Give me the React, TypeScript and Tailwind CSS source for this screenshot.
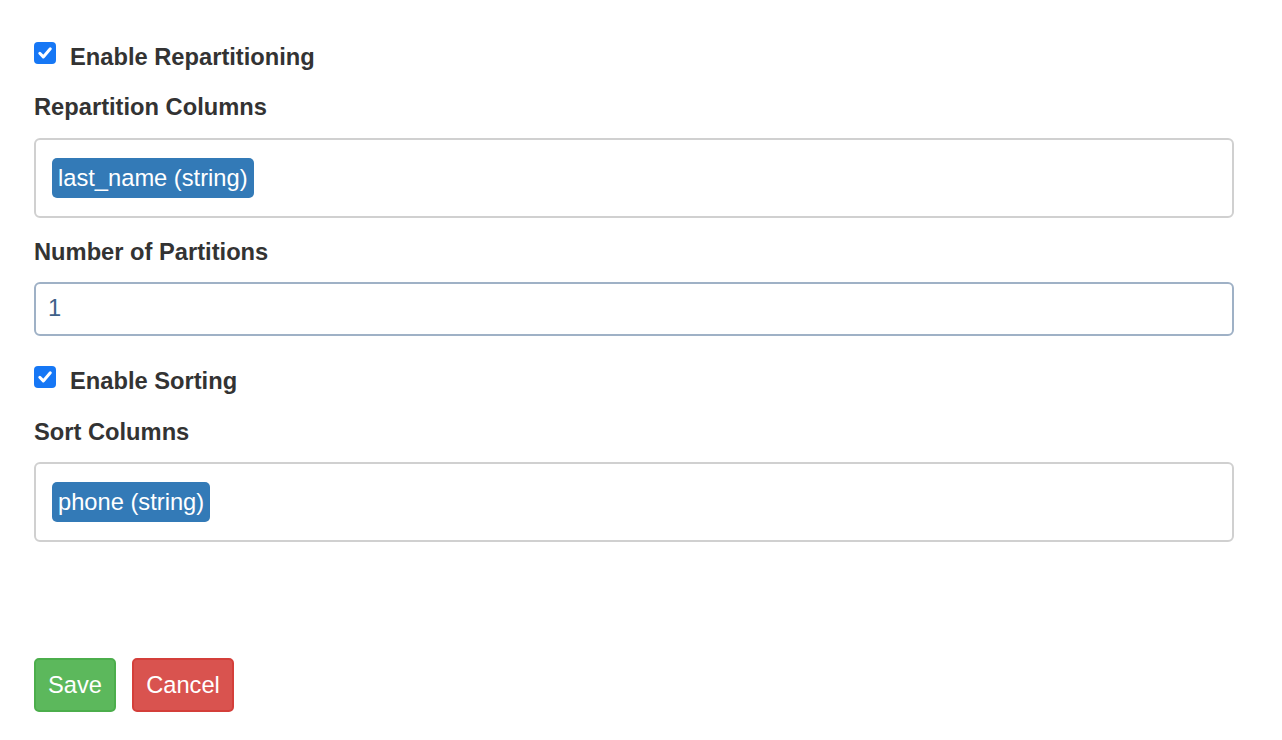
import React from "react";

function Check() {
  return (
    <div className="w-[22px] h-[22px] rounded-[4px] bg-[#1677f5] flex items-center justify-center shrink-0">
      <svg width="22" height="22" viewBox="0 0 22 22">
        <path d="M5.8 11.3 L9.3 14.9 L16.3 6.8" fill="none" stroke="#fff" strokeWidth="3" strokeLinecap="round" strokeLinejoin="round" />
      </svg>
    </div>
  );
}

function Tag({ text }: { text: string }) {
  return (
    <span className="inline-block bg-[#337ab7] text-white rounded-[5px] px-[6px] h-[40px] leading-[40px]">{text}</span>
  );
}

export default function App() {
  return (
    <div className="w-[1282px] h-[740px] bg-white text-[#333] text-[23.7px]" style={{ fontFamily: '"Liberation Sans", Arial, sans-serif' }}>
      <div className="pl-[34px] pt-[42px] w-[1234px] flex flex-col">
        <div className="flex items-start gap-[14px]">
          <Check />
          <span className="font-bold leading-[28px] pt-[1px]">Enable Repartitioning</span>
        </div>
        <div className="font-bold leading-[28px] mt-[21px] pt-[1px]">Repartition Columns</div>
        <div className="mt-[17px] h-[80px] border-2 border-[#d0d0d0] rounded-[6px] pl-[16px] pt-[18px]">
          <Tag text="last_name (string)" />
        </div>
        <div className="font-bold leading-[28px] mt-[19px] pt-[1px]">Number of Partitions</div>
        <div className="mt-[16px] h-[54px] border-2 border-[#9fb1c6] rounded-[6px] pl-[12px] flex items-center text-[#3e6189]">
          1
        </div>
        <div className="flex items-start gap-[14px] mt-[30px]">
          <Check />
          <span className="font-bold leading-[28px] pt-[1px]">Enable Sorting</span>
        </div>
        <div className="font-bold leading-[28px] mt-[22px] pt-[1px]">Sort Columns</div>
        <div className="mt-[16px] h-[80px] border-2 border-[#d0d0d0] rounded-[6px] pl-[16px] pt-[18px]">
          <Tag text="phone (string)" />
        </div>
        <div className="flex gap-[16px] mt-[116px]">
          <button className="h-[54px] w-[82px] bg-[#5cb85c] border-2 border-[#4cae4c] rounded-[5px] text-white pt-[1px]">Save</button>
          <button className="h-[54px] w-[102px] bg-[#d9534f] border-2 border-[#d43f3a] rounded-[5px] text-white pt-[1px]">Cancel</button>
        </div>
      </div>
    </div>
  );
}
